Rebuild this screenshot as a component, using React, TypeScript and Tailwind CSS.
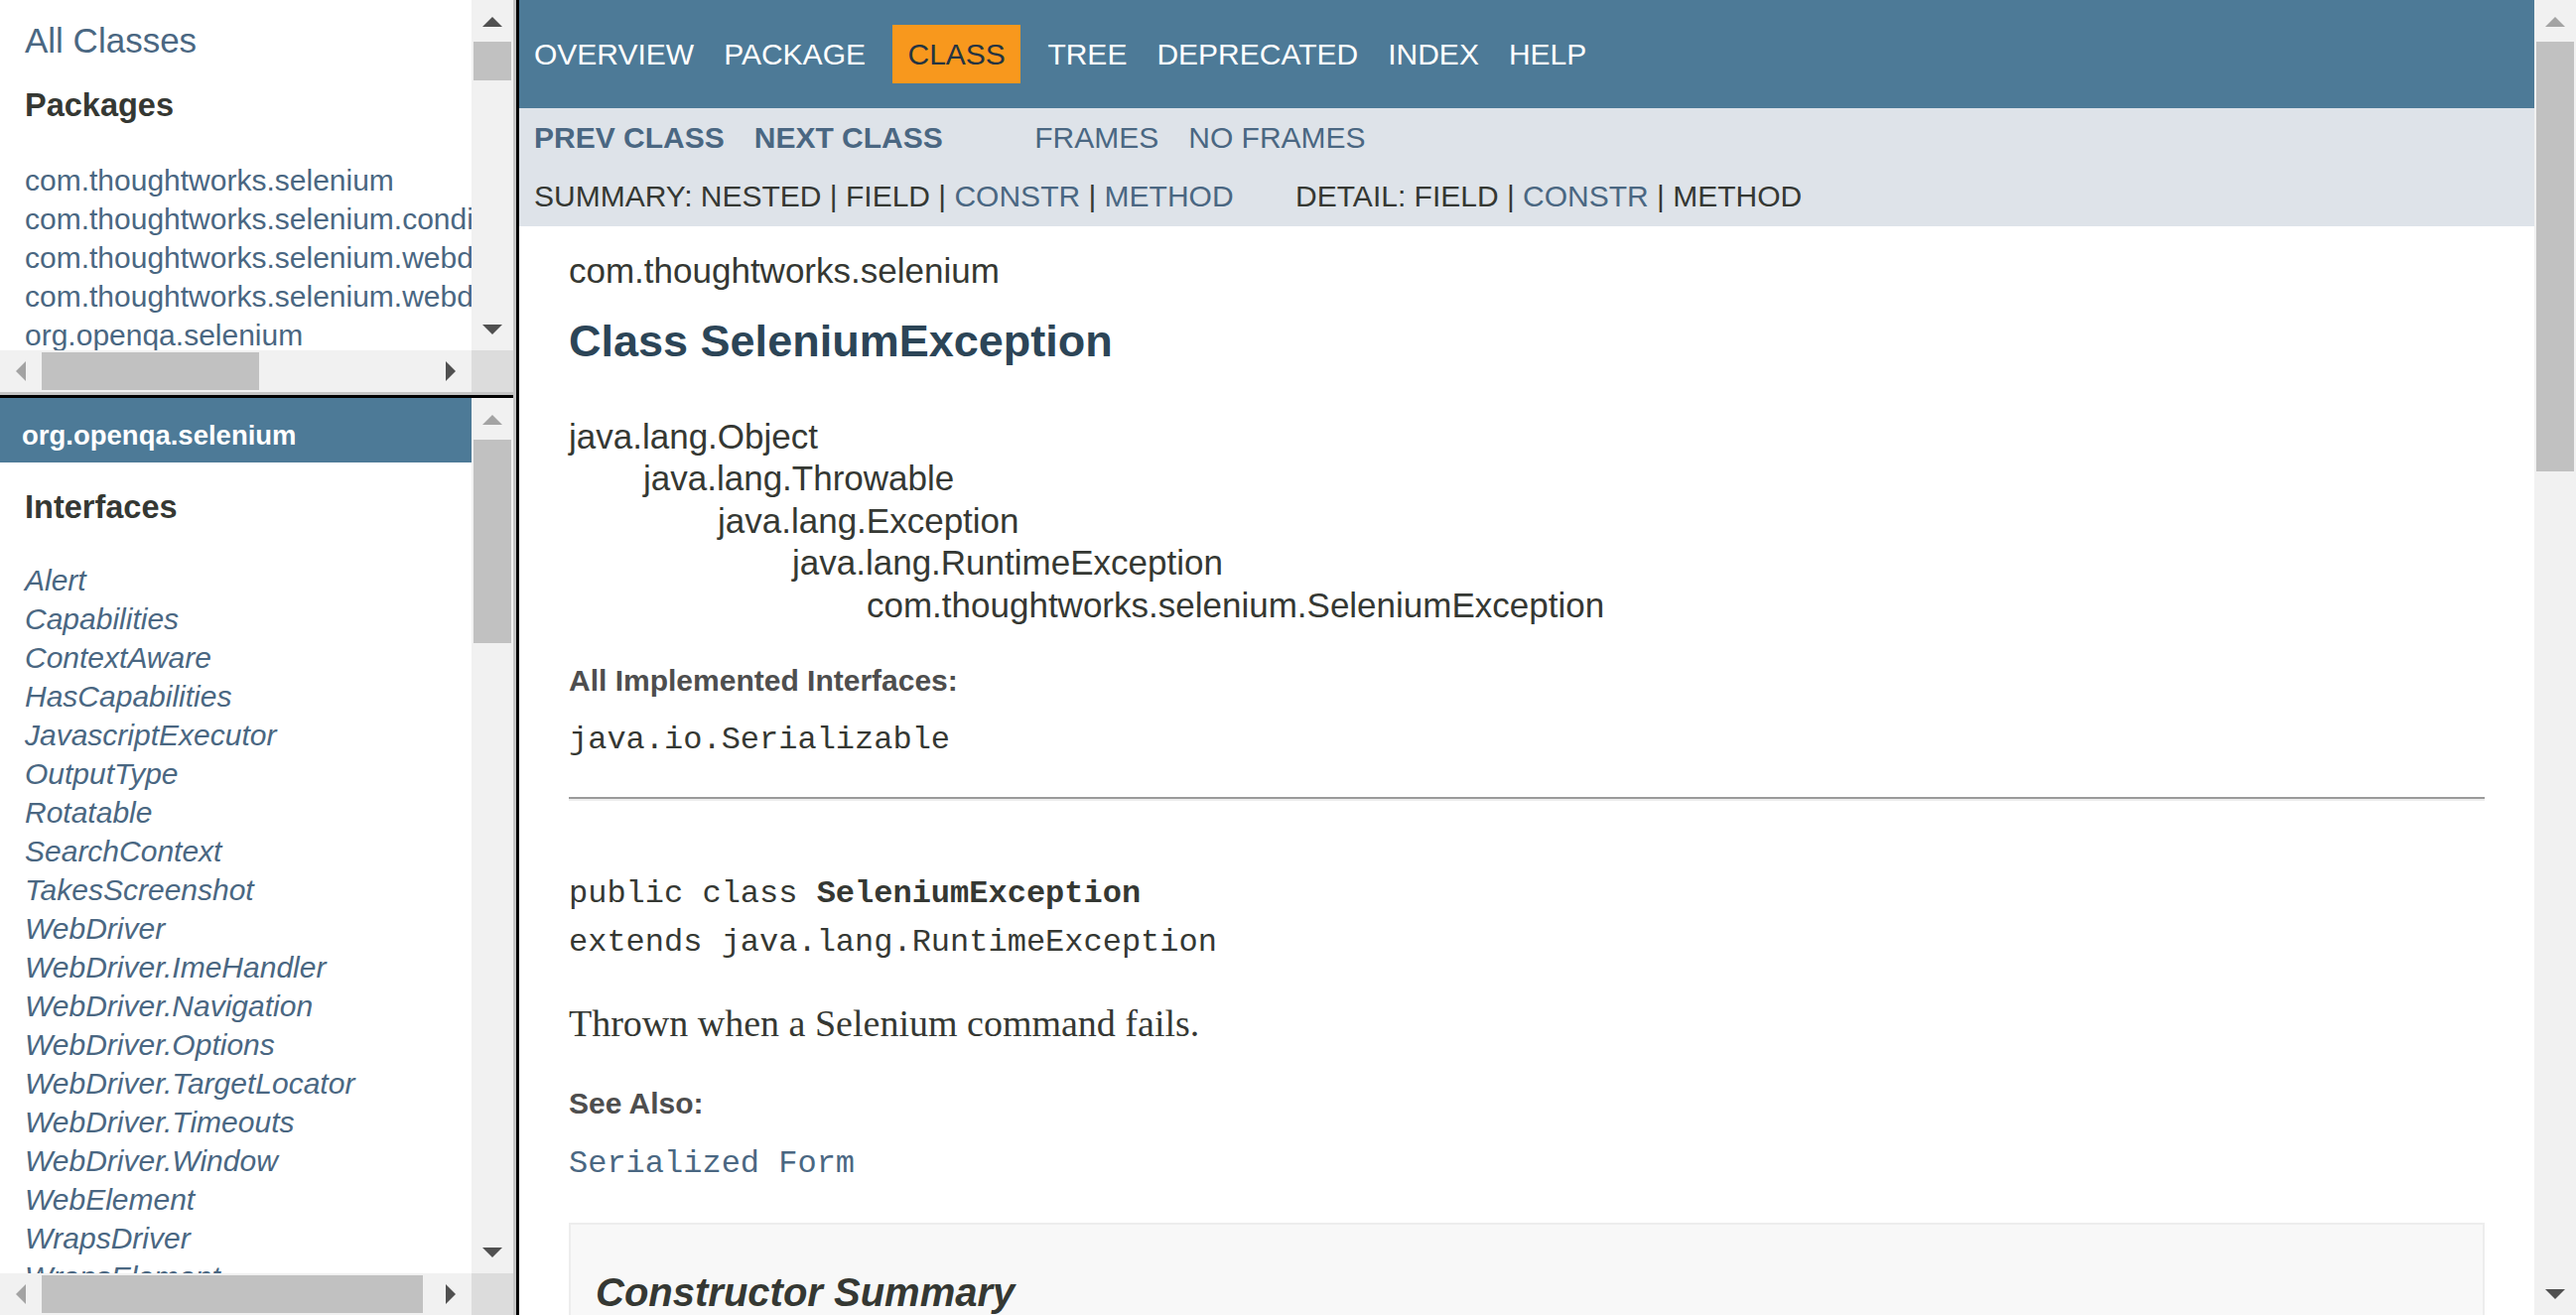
import React from "react";

type Dir = "up" | "down" | "left" | "right";

function Arrow({ dir, dark }: { dir: Dir; dark: boolean }) {
  const fill = dark ? "#505050" : "#a3a3a3";
  if (dir === "up")
    return (
      <svg width="20" height="10" viewBox="0 0 20 10">
        <polygon points="10,0 20,10 0,10" fill={fill} />
      </svg>
    );
  if (dir === "down")
    return (
      <svg width="20" height="10" viewBox="0 0 20 10">
        <polygon points="0,0 20,0 10,10" fill={fill} />
      </svg>
    );
  if (dir === "left")
    return (
      <svg width="10" height="20" viewBox="0 0 10 20">
        <polygon points="10,0 10,20 0,10" fill={fill} />
      </svg>
    );
  return (
    <svg width="10" height="20" viewBox="0 0 10 20">
      <polygon points="0,0 10,10 0,20" fill={fill} />
    </svg>
  );
}

function VScroll({
  thumbClass,
  upDark,
  downDark,
}: {
  thumbClass: string;
  upDark: boolean;
  downDark: boolean;
}) {
  return (
    <div className="flex w-[42px] shrink-0 flex-col bg-[#f1f1f1]">
      <div className="flex h-[42px] shrink-0 items-center justify-center pt-[2px]">
        <Arrow dir="up" dark={upDark} />
      </div>
      <div className={"mx-[2px] shrink-0 bg-[#c1c1c1] " + thumbClass} />
      <div className="flex-1" />
      <div className="flex h-[42px] shrink-0 items-center justify-center">
        <Arrow dir="down" dark={downDark} />
      </div>
    </div>
  );
}

function HScroll({ thumbClass }: { thumbClass: string }) {
  return (
    <div className="flex h-[42px] shrink-0">
      <div className="flex flex-1 bg-[#f1f1f1]">
        <div className="flex w-[42px] shrink-0 items-center justify-center">
          <Arrow dir="left" dark={false} />
        </div>
        <div className={"my-[2px] shrink-0 bg-[#c1c1c1] " + thumbClass} />
        <div className="flex-1" />
        <div className="flex w-[42px] shrink-0 items-center justify-center">
          <Arrow dir="right" dark={true} />
        </div>
      </div>
      <div className="w-[42px] shrink-0 bg-[#dcdcdc]" />
    </div>
  );
}

const packages = [
  "com.thoughtworks.selenium",
  "com.thoughtworks.selenium.condition",
  "com.thoughtworks.selenium.webdriven",
  "com.thoughtworks.selenium.webdriven.commands",
  "org.openqa.selenium",
];

const interfaces = [
  "Alert",
  "Capabilities",
  "ContextAware",
  "HasCapabilities",
  "JavascriptExecutor",
  "OutputType",
  "Rotatable",
  "SearchContext",
  "TakesScreenshot",
  "WebDriver",
  "WebDriver.ImeHandler",
  "WebDriver.Navigation",
  "WebDriver.Options",
  "WebDriver.TargetLocator",
  "WebDriver.Timeouts",
  "WebDriver.Window",
  "WebElement",
  "WrapsDriver",
  "WrapsElement",
];

function TopLeftFrame() {
  return (
    <div className="flex h-[398px] shrink-0 flex-col border-b-[3px] border-[#c4c4c4]">
      <div className="flex min-h-0 flex-1">
        <div className="min-w-0 flex-1 overflow-hidden whitespace-nowrap bg-white pl-[25px]">
          <div className="pt-[21px] text-[35px] leading-[40px] text-[#4A6782]">All Classes</div>
          <h2 className="mt-[27px] pb-[7.5px] text-[32.5px] font-bold leading-[37px] text-[#353833]">
            Packages
          </h2>
          <ul className="mt-[27px] text-[30px] text-[#4A6782]">
            {packages.map((p) => (
              <li key={p} className="pt-[5px] leading-[34px]">
                {p}
              </li>
            ))}
          </ul>
        </div>
        <VScroll thumbClass="h-[39px]" upDark={true} downDark={true} />
      </div>
      <HScroll thumbClass="w-[219px]" />
    </div>
  );
}

function BottomLeftFrame() {
  return (
    <div className="flex min-h-0 flex-1 flex-col border-t-[3px] border-black">
      <div className="flex min-h-0 flex-1">
        <div className="min-w-0 flex-1 overflow-hidden whitespace-nowrap bg-white">
          <h1 className="bg-[#4D7A97] pb-[11px] pl-[22px] pr-[14px] pt-[22px] text-[27.5px] font-bold leading-[31.6px] text-white">
            org.openqa.selenium
          </h1>
          <div className="pl-[25px]">
            <h2 className="mt-[27px] pb-[7.5px] text-[32.5px] font-bold leading-[37.35px] text-[#353833]">
              Interfaces
            </h2>
            <ul className="mt-[26px] text-[30px] italic text-[#4A6782]">
              {interfaces.map((p) => (
                <li key={p} className="pt-[5px] leading-[34px]">
                  {p}
                </li>
              ))}
            </ul>
          </div>
        </div>
        <VScroll thumbClass="h-[205px]" upDark={false} downDark={true} />
      </div>
      <HScroll thumbClass="w-[384px]" />
    </div>
  );
}

function NavItem({ children, active }: { children: React.ReactNode; active?: boolean }) {
  return (
    <li
      className={
        active
          ? "mx-[12.5px] bg-[#F8981D] px-[15px] py-[12.5px] leading-[34px] text-[#253441]"
          : "px-[15px] py-[12.5px] leading-[34px]"
      }
    >
      {children}
    </li>
  );
}

const MONO = "font-['Liberation_Mono','DejaVu_Sans_Mono',monospace]";

function MainFrame() {
  const tree = [
    "java.lang.Object",
    "java.lang.Throwable",
    "java.lang.Exception",
    "java.lang.RuntimeException",
    "com.thoughtworks.selenium.SeleniumException",
  ];
  const indents = ["pl-0", "pl-[75px]", "pl-[150px]", "pl-[225px]", "pl-[300px]"];
  return (
    <div className="flex min-w-0 flex-1">
      <div className="min-w-0 flex-1 overflow-hidden whitespace-nowrap bg-white text-[#353833]">
        {/* top nav */}
        <div className="h-[109px] bg-[#4D7A97] pt-[25px] text-[30px] uppercase text-white">
          <ul className="flex">
            <NavItem>Overview</NavItem>
            <NavItem>Package</NavItem>
            <NavItem active>Class</NavItem>
            <NavItem>Tree</NavItem>
            <NavItem>Deprecated</NavItem>
            <NavItem>Index</NavItem>
            <NavItem>Help</NavItem>
          </ul>
        </div>
        {/* sub nav */}
        <div className="bg-[#dee3e9] text-[30px] uppercase">
          <div className="flex h-[72px]">
            <ul className="mr-[62.5px] flex font-bold text-[#4A6782]">
              <li className="px-[15px] py-[12.5px] leading-[34px]">Prev Class</li>
              <li className="px-[15px] py-[12.5px] leading-[34px]">Next Class</li>
            </ul>
            <ul className="flex text-[#4A6782]">
              <li className="px-[15px] py-[12.5px] leading-[34px]">Frames</li>
              <li className="px-[15px] py-[12.5px] leading-[34px]">No&nbsp;Frames</li>
            </ul>
          </div>
          <div className="flex pb-[12.5px] pl-[15px] leading-[34px]">
            <ul className="mr-[62.5px] flex">
              <li>Summary:&nbsp;</li>
              <li>Nested&nbsp;|&nbsp;</li>
              <li>Field&nbsp;|&nbsp;</li>
              <li>
                <span className="text-[#4A6782]">Constr</span>&nbsp;|&nbsp;
              </li>
              <li className="text-[#4A6782]">Method</li>
            </ul>
            <ul className="flex">
              <li>Detail:&nbsp;</li>
              <li>Field&nbsp;|&nbsp;</li>
              <li>
                <span className="text-[#4A6782]">Constr</span>&nbsp;|&nbsp;
              </li>
              <li>Method</li>
            </ul>
          </div>
        </div>
        {/* header */}
        <div className="mx-[50px] pt-[12.5px]">
          <div className="mt-[12.5px] text-[35px] leading-[40px]">com.thoughtworks.selenium</div>
          <h2 className="my-[25px] text-[45px] font-bold leading-[52px] text-[#2c4557]">
            Class SeleniumException
          </h2>
        </div>
        {/* content */}
        <div className="px-[50px] pt-[25px]">
          <ul className="text-[35px]">
            {tree.map((t, i) => (
              <li key={t} className={(i > 0 ? "pt-[2.5px] " : "") + indents[i] + " leading-[40px]"}>
                {t}
              </li>
            ))}
          </ul>
          <dl>
            <dt className="mt-[35px] text-[30px] font-bold leading-[42px] text-[#4E4E4E]">
              All Implemented Interfaces:
            </dt>
            <dd className={"mt-[14px] text-[32px] leading-[49px] " + MONO}>java.io.Serializable</dd>
          </dl>
          <div className="mt-[33.5px] h-[4px] border-b-2 border-t-2 border-b-[#eeeeee] border-t-[#9a9a9a]" />
          <pre className={"mt-[69px] text-[32px] leading-[49px] " + MONO}>
            {"public class "}
            <span className="font-bold">SeleniumException</span>
            {"\nextends java.lang.RuntimeException"}
          </pre>
          <div className="mt-[32.5px] font-['Liberation_Serif',Georgia,serif] text-[38px] leading-[49px]">
            Thrown when a Selenium command fails.
          </div>
          <dl>
            <dt className="mt-[35px] text-[30px] font-bold leading-[42px] text-[#4E4E4E]">See Also:</dt>
            <dd className={"mt-[15.5px] text-[32px] leading-[49px] text-[#4A6782] " + MONO}>
              Serialized Form
            </dd>
          </dl>
          <div className="mt-[34.5px] border-2 border-[#ededed] bg-[#f8f8f8] pb-[12.5px] pl-[25px] pr-[50px]">
            <h3 className="mt-[40px] text-[40px] font-bold italic leading-[56px] text-[#353833]">
              Constructor Summary
            </h3>
            <div className="h-[400px]" />
          </div>
        </div>
      </div>
      <VScroll thumbClass="h-[433px]" upDark={false} downDark={true} />
    </div>
  );
}

export default function App() {
  return (
    <div className="flex h-[1325px] w-[2595px] overflow-hidden bg-white font-['Liberation_Sans',Arial,Helvetica,sans-serif] text-[#353833]">
      <div className="flex w-[520px] shrink-0 flex-col border-r-[3px] border-[#c4c4c4]">
        <TopLeftFrame />
        <BottomLeftFrame />
      </div>
      <div className="w-[3px] shrink-0 bg-black" />
      <MainFrame />
    </div>
  );
}
